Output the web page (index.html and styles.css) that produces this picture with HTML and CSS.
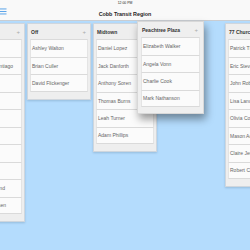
FILE: index.html
```html
<!DOCTYPE html>
<html>
<head>
<meta charset="utf-8">
<link rel="stylesheet" href="styles.css">
</head>
<body>
<div class="app">
  <header class="topbar">
    <div class="time">12:00 PM</div>
    <div class="navrow">
      <svg class="menu" width="7" height="7" viewBox="0 0 7 7">
        <rect x="0" y="0.5" width="6.5" height="0.9" fill="#4a9be8"/>
        <rect x="0" y="3" width="6.5" height="0.9" fill="#4a9be8"/>
        <rect x="0" y="5.5" width="6.5" height="0.9" fill="#4a9be8"/>
      </svg>
      <div class="title">Cobb Transit Region</div>
      <div></div>
    </div>
  </header>
  <main class="board">
    <section class="column">
      <div class="col-head"><span>Downtown</span><span class="plus">+</span></div>
      <div class="card">Mary Smith</div>
      <div class="card">Christopher Santiago</div>
      <div class="card">Kevin Ross</div>
      <div class="card">Paul Grant</div>
      <div class="card">Nina Park</div>
      <div class="card">Tom Baker</div>
      <div class="card">Sara Kim</div>
      <div class="card">Joe Hardy</div>
      <div class="card">Christopher Bond</div>
      <div class="card">Alexandra Jensen</div>
    </section>
    <section class="column">
      <div class="col-head"><span>Off</span><span class="plus">+</span></div>
      <div class="card">Ashley Walton</div>
      <div class="card">Brian Culler</div>
      <div class="card">David Flickenger</div>
    </section>
    <section class="column">
      <div class="col-head"><span>Midtown</span><span class="plus covered">+</span></div>
      <div class="card">Daniel Lopez</div>
      <div class="card">Jack Danforth</div>
      <div class="card">Anthony Soren</div>
      <div class="card">Thomas Burns</div>
      <div class="card">Leah Turner</div>
      <div class="card">Adam Phillips</div>
    </section>
    <div class="slot"></div>
    <section class="column">
      <div class="col-head"><span>77 Church Street</span><span class="plus">+</span></div>
      <div class="card">Patrick Thompson</div>
      <div class="card">Eric Stevens</div>
      <div class="card">John Roberts</div>
      <div class="card">Lisa Landry</div>
      <div class="card">Olivia Cooper</div>
      <div class="card">Mason Adams</div>
      <div class="card">Claire Jenkins</div>
      <div class="card">Robert Chen</div>
    </section>
    <section class="column dragging">
      <div class="col-head"><span>Peachtree Plaza</span><span class="plus">+</span></div>
      <div class="card">Elizabeth Walker</div>
      <div class="card">Angela Vonn</div>
      <div class="card">Charlie Cook</div>
      <div class="card">Mark Nathanson</div>
    </section>
  </main>
</div>
</body>
</html>
```

FILE: styles.css
```css
html, body {
  margin: 0;
  padding: 0;
  width: 250px;
  height: 250px;
  overflow: hidden;
  background: #b4dcfd;
  font-family: "Liberation Sans", Arial, sans-serif;
}

.app {
  width: 250px;
  height: 250px;
  overflow: hidden;
}

.topbar {
  height: 19px;
  background: #f9f9f9;
  border-bottom: 1px solid #c9cdd2;
  display: flex;
  flex-direction: column;
  padding-top: 1px;
  box-sizing: content-box;
}

.time {
  height: 4px;
  line-height: 4px;
  font-size: 3.4px;
  text-align: center;
  color: #222;
}

.navrow {
  height: 15px;
  display: grid;
  grid-template-columns: 1fr auto 1fr;
  align-items: center;
  padding-top: 2px;
  box-sizing: border-box;
}

.menu {
  align-self: start;
  margin-top: 1px;
  display: block;
}

.title {
  font-size: 5.4px;
  font-weight: bold;
  color: #1e1e1e;
  text-align: center;
}

.board {
  position: relative;
  display: flex;
  align-items: flex-start;
  gap: 2px;
  margin-left: -39px;
  padding-top: 2px;
}

.column {
  flex: 0 0 64px;
  width: 64px;
  box-sizing: border-box;
  background: #eeeeee;
  border: 1px solid #cfd6dd;
  padding: 0 2px 7px;
  box-shadow: 0 1px 2px rgba(60, 90, 120, 0.25);
}

.slot {
  flex: 0 0 64px;
  height: 10px;
}

.col-head {
  height: 15px;
  display: flex;
  align-items: center;
  justify-content: space-between;
  padding: 0 2px 0 1px;
  font-size: 5px;
  font-weight: bold;
  color: #333;
  white-space: nowrap;
}

.plus {
  font-weight: normal;
  font-size: 6px;
  color: #aaa;
}

.covered {
  visibility: hidden;
}

.card {
  height: 17.5px;
  box-sizing: border-box;
  background: #fbfbfb;
  border-top: 1px solid #dadada;
  border-left: 1px solid #e4e4e4;
  border-right: 1px solid #e4e4e4;
  padding-left: 1px;
  display: flex;
  align-items: center;
  font-size: 5px;
  color: #666;
  white-space: nowrap;
  overflow: hidden;
}

.card:last-child {
  border-bottom: 1px solid #dadada;
}

.dragging {
  position: absolute;
  left: 176px;
  top: 0;
  width: 67px;
  padding: 0 3px 6px;
  background: #efefef;
  border-color: #d8d8d8;
  box-shadow: 2px 5px 8px rgba(0, 0, 0, 0.4);
}
```
